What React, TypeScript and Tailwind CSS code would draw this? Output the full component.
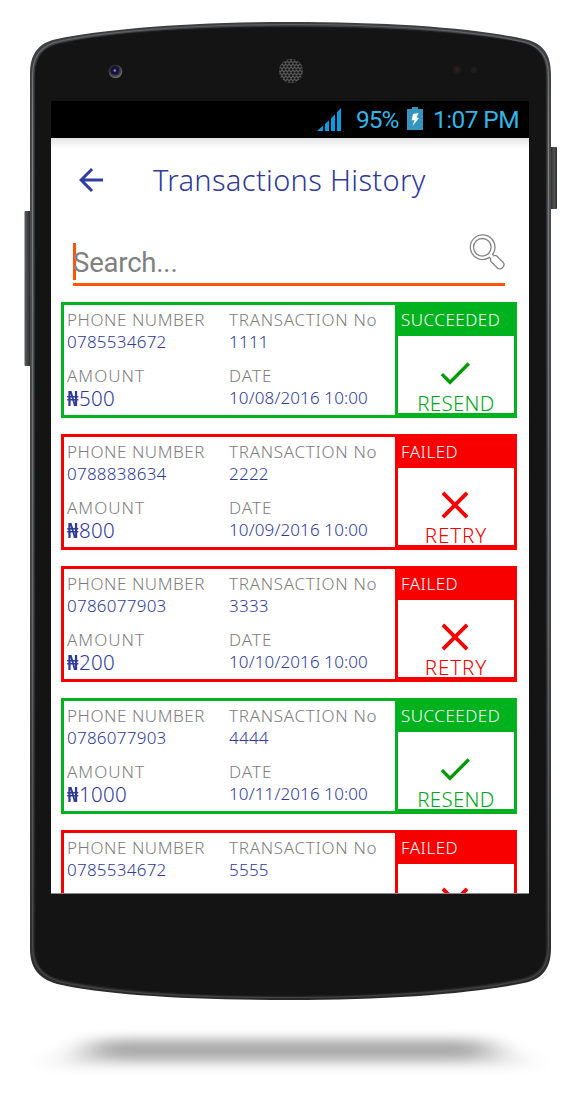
import React from "react";

type Status = "SUCCEEDED" | "FAILED";

interface Transaction {
  phone: string;
  number: string;
  amount?: string;
  date?: string;
  status: Status;
}

const transactions: Transaction[] = [
  { phone: "0785534672", number: "1111", amount: "500", date: "10/08/2016 10:00", status: "SUCCEEDED" },
  { phone: "0788838634", number: "2222", amount: "800", date: "10/09/2016 10:00", status: "FAILED" },
  { phone: "0786077903", number: "3333", amount: "200", date: "10/10/2016 10:00", status: "FAILED" },
  { phone: "0786077903", number: "4444", amount: "1000", date: "10/11/2016 10:00", status: "SUCCEEDED" },
  { phone: "0785534672", number: "5555", status: "FAILED" },
];

const BODY =
  "M30 74 C30 54 38 43 57 39 C105 29 190 22 290 22 C390 22 476 28 524 39 C543 43 551 54 551 74 L551 948 C551 968 543 979 524 983 C476 993 390 1000 290 1000 C190 1000 105 995 57 984 C38 978 30 968 30 948 Z";
const FACE =
  "M35 76 C35 58 42 48 59 44 C106 33 190 27 290 27 C390 27 475 33 522 43 C539 47 546 57 546 76 L546 947 C546 964 539 974 522 978 C475 988 390 996 290 996 C190 996 106 990 59 979 C42 974 35 964 35 947 Z";

function PhoneFrame() {
  return (
    <svg className="absolute inset-0" width="580" height="1100" viewBox="0 0 580 1100" aria-hidden="true">
      <defs>
        <linearGradient id="rim" x1="0" y1="0" x2="0" y2="1">
          <stop offset="0" stopColor="#3c3e40" />
          <stop offset="0.2" stopColor="#484a4d" />
          <stop offset="0.6" stopColor="#444548" />
          <stop offset="1" stopColor="#2a2a2a" />
        </linearGradient>
        <linearGradient id="rimLight" x1="0" y1="0" x2="0" y2="1">
          <stop offset="0" stopColor="#5c5e60" />
          <stop offset="0.1" stopColor="#7b7e81" />
          <stop offset="0.6" stopColor="#66686c" />
          <stop offset="1" stopColor="#424242" />
        </linearGradient>
        <linearGradient id="key" x1="0" y1="0" x2="1" y2="0">
          <stop offset="0" stopColor="#5a5c5d" />
          <stop offset="0.4" stopColor="#454748" />
          <stop offset="1" stopColor="#1d1d1d" />
        </linearGradient>
        <linearGradient id="keyRight" x1="0" y1="0" x2="1" y2="0">
          <stop offset="0" stopColor="#222" />
          <stop offset="0.6" stopColor="#555" />
          <stop offset="1" stopColor="#2a2a2a" />
        </linearGradient>
        <radialGradient id="lens" cx="0.45" cy="0.4" r="0.6">
          <stop offset="0" stopColor="#24245c" />
          <stop offset="0.45" stopColor="#141428" />
          <stop offset="0.65" stopColor="#3c3a3e" />
          <stop offset="1" stopColor="#77757a" />
        </radialGradient>
        <pattern id="mesh" x="291" y="71" width="3.6" height="6" patternUnits="userSpaceOnUse">
          <rect width="3.6" height="6" fill="#606060" />
          <circle cx="1.8" cy="1.5" r="1.3" fill="#131313" />
          <circle cx="0" cy="4.5" r="1.3" fill="#131313" />
          <circle cx="3.6" cy="4.5" r="1.3" fill="#131313" />
        </pattern>
        <filter id="soft" x="-20%" y="-200%" width="140%" height="500%">
          <feGaussianBlur stdDeviation="18 6" />
        </filter>
      </defs>
      <path d="M90 1042 L490 1042 L530 1066 L50 1066 Z" fill="#000" opacity="0.11" filter="url(#soft)" />
      <rect x="92" y="1039" width="396" height="20" rx="10" fill="#000" opacity="0.26" filter="url(#soft)" />
      <rect x="24.5" y="211" width="7" height="155" rx="1" fill="url(#key)" />
      <rect x="550" y="147" width="7" height="62" rx="1" fill="url(#keyRight)" />
      <path d={BODY} fill="url(#rim)" />
      <path d={FACE} fill="#141414" stroke="#1b1b1b" strokeWidth="1" />
      <path d={BODY} fill="none" stroke="url(#rimLight)" strokeWidth="1.2" transform="translate(2.8 2.6) scale(0.9904 0.9949)" />
      <circle cx="115.5" cy="71.5" r="6.8" fill="url(#lens)" />
      <circle cx="115.5" cy="71" r="3.2" fill="#12124a" />
      <circle cx="114.8" cy="70.5" r="1.3" fill="#7f86c8" />
      <circle cx="291" cy="71" r="12" fill="url(#mesh)" />
      <circle cx="457" cy="70" r="4.5" fill="#1f1b1b" />
      <circle cx="457" cy="69.5" r="2" fill="#2a2222" />
      <circle cx="474" cy="70" r="3" fill="#211d1d" />
    </svg>
  );
}

function StatusBar() {
  return (
    <div className="flex h-[37px] shrink-0 items-center bg-black pr-[9px] font-['Roboto',sans-serif] text-[24.5px] leading-[37px] text-[#33b5e5]">
      <svg className="ml-auto" width="24" height="24" viewBox="0 0 24 24" fill="#0b9be0" aria-hidden="true">
        <path d="M0 23 L6 17.8 V23 Z M8 16 L12 12.3 V23 H8 Z M14 10.5 L18 6.3 V23 H14 Z M20 4.2 L24 0 V23 H20 Z" />
      </svg>
      <span className="ml-[15px] w-[43px] whitespace-nowrap tracking-[-1px]">95%</span>
      <svg className="ml-[8px]" width="16" height="26" viewBox="0 0 16 26" aria-hidden="true">
        <path d="M0 2 H5 V0 H11 V2 H16 V23 H0 Z" fill="#3595bd" />
        <path d="M6 7 L11.5 6 L9.5 10.5 L12 11 L5.5 19 L7.5 13 L4.5 13.5 Z" fill="#fff" />
      </svg>
      <span className="ml-[10px] w-[87px] whitespace-nowrap tracking-[-0.6px]">1:07 PM</span>
    </div>
  );
}

function AppBar() {
  return (
    <header className="flex h-[84px] shrink-0 items-center bg-linear-to-b from-[#e4e4e4] via-white via-[12%] to-white pl-[22px]">
      <svg width="36" height="36" viewBox="0 0 24 24" fill="#303f9f" aria-hidden="true">
        <path d="M20 11H7.83l5.59-5.59L12 4l-8 8 8 8 1.41-1.41L7.83 13H20v-2z" />
      </svg>
      <h1 className="ml-[44px] whitespace-nowrap text-[29px] leading-[36px] font-light tracking-[0.33px] text-[#303a98]">
        Transactions History
      </h1>
    </header>
  );
}

function SearchField() {
  return (
    <div className="mr-[24px] ml-[22px] flex h-[64px] shrink-0 items-start border-b-[3px] border-[#ff5500] pt-[11px]">
      <span className="mt-[10px] h-[37px] w-[3px] shrink-0 bg-[#ff5500]" />
      <span className="-ml-[3px] mt-[12px] font-['Roboto',sans-serif] text-[27.5px] leading-[36px] tracking-[-0.2px] text-[#808080]">
        Search...
      </span>
      <svg className="ml-auto" width="36" height="38" viewBox="0 0 36 38" fill="none" stroke="#858585" strokeWidth="1.3" aria-hidden="true">
        <circle cx="13.3" cy="14.3" r="8.8" />
        <path d="M23.6 21.4 A12.3 12.3 0 1 0 20.5 24.4 L21.8 26 C21.2 27 21.4 28 22.2 28.8 L28.2 34.8 C30 36.6 32.4 36 33.8 34.4 C35.3 32.7 35.5 30.8 34 29.2 L27.7 23 C26.8 22.2 25.9 22.2 25 22.8 Z" />
      </svg>
    </div>
  );
}

function ResultIcon({ ok }: { ok: boolean }) {
  return ok ? (
    <svg width="40" height="40" viewBox="0 0 24 24" fill="#009900" aria-hidden="true">
      <path d="M9 16.17L4.83 12l-1.42 1.41L9 19 21 7l-1.41-1.41z" />
    </svg>
  ) : (
    <svg width="46" height="46" viewBox="0 0 24 24" fill="#f80000" aria-hidden="true">
      <path d="M19 6.41L17.59 5 12 10.59 6.41 5 5 6.41 10.59 12 5 17.59 6.41 19 12 13.41 17.59 19 19 17.59 13.41 12z" />
    </svg>
  );
}

function TransactionCard({ item }: { item: Transaction }) {
  const ok = item.status === "SUCCEEDED";
  const label = "block text-[17px] leading-[22px] font-light text-[#7d7d7d]";
  const value = "block text-[17px] leading-[22px] font-light text-[#303a98]";
  return (
    <article className={`flex h-[116px] shrink-0 border-[3px] whitespace-nowrap ${ok ? "border-[#00b31e]" : "border-[#f80000]"}`}>
      <div className="grid flex-1 grid-cols-[162px_1fr] content-start gap-y-[12px] pt-[4px] pl-[3px]">
        <div>
          <span className={`${label} tracking-[0.55px]`}>PHONE NUMBER</span>
          <span className={`${value} tracking-[0.25px]`}>{item.phone}</span>
        </div>
        <div>
          <span className={`${label} tracking-[0.7px]`}>TRANSACTION No</span>
          <span className={`${value} tracking-[0.25px]`}>{item.number}</span>
        </div>
        {item.amount && (
          <div>
            <span className={`${label} tracking-[1px]`}>AMOUNT</span>
            <div className="flex h-[22px] text-[20.5px] leading-[22px] text-[#303a98]">
              <span className="w-[12px] origin-left scale-x-[0.98] font-bold">₦</span>
              <span className="font-light tracking-[0.3px]">{item.amount}</span>
            </div>
          </div>
        )}
        {item.date && (
          <div>
            <span className={`${label} tracking-[1px]`}>DATE</span>
            <span className={`${value} tracking-[0.13px]`}>{item.date}</span>
          </div>
        )}
      </div>
      <div className={`flex w-[119px] flex-col border-b-2 border-l-[3px] ${ok ? "border-[#00b31e]" : "border-[#f80000]"}`}>
        <div className={`h-[31px] shrink-0 pt-[4px] pl-[3px] text-[17px] leading-[22px] font-light tracking-[0.5px] text-white ${ok ? "bg-[#00b31e]" : "bg-[#f80000]"}`}>
          {item.status}
        </div>
        <div className="flex h-[60px] shrink-0 items-end justify-center pr-[1.5px]">
          <div className="flex h-[47px] items-center">
            <ResultIcon ok={ok} />
          </div>
        </div>
        {item.amount && (
          <div className={`-mt-[4px] text-center text-[20.5px] leading-[22px] font-light ${ok ? "tracking-[0.3px] text-[#00a51c]" : "tracking-[0.9px] text-[#f00000]"}`}>
            {ok ? "RESEND" : "RETRY"}
          </div>
        )}
      </div>
    </article>
  );
}

export default function App() {
  return (
    <div className="relative h-[1100px] w-[580px] overflow-hidden bg-white pt-[101px] pl-[51px] font-['Noto_Sans','Open_Sans',sans-serif]">
      <PhoneFrame />
      <main className="relative flex h-[792px] w-[478px] flex-col overflow-hidden bg-white shadow-[0_1px_0_#8a8a8a]">
        <StatusBar />
        <AppBar />
        <SearchField />
        <section className="mt-[16px] ml-[10px] flex w-[456px] flex-col gap-[16px]">
          {transactions.map((t) => (
            <TransactionCard key={t.number} item={t} />
          ))}
        </section>
      </main>
    </div>
  );
}
